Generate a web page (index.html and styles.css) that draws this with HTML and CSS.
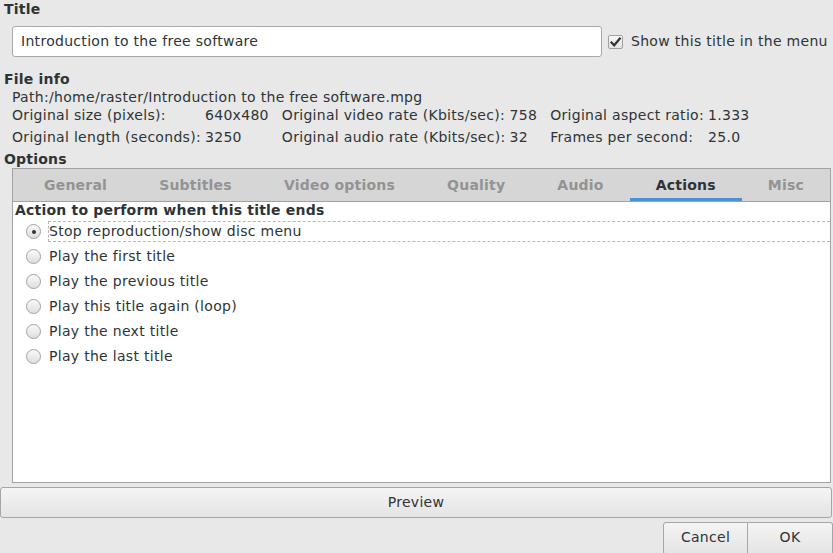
FILE: index.html
```html
<!DOCTYPE html>
<html>
<head>
<meta charset="utf-8">
<link rel="stylesheet" href="styles.css">
</head>
<body>
<div class="window">
  <div class="heading">Title</div>
  <div class="title-row">
    <div class="entry">Introduction to the free software</div>
    <label class="check">
      <span class="checkbox"><svg width="13" height="12" viewBox="0 0 13 12"><path d="M2.5 6.5 L5.2 9.3 L10.8 2.6" fill="none" stroke="#2e3436" stroke-width="2.2" stroke-linecap="square"/></svg></span>
      <span class="check-text">Show this title in the menu</span>
    </label>
  </div>
  <div class="heading fileinfo">File info</div>
  <div class="info">
    <div class="path">Path:/home/raster/Introduction to the free software.mpg</div>
    <div class="grid">
      <span class="lbl">Original size (pixels):</span><span class="val">640x480</span>
      <span class="lbl">Original video rate (Kbits/sec):</span><span class="val">758</span>
      <span class="lbl">Original aspect ratio:</span><span class="val">1.333</span>
      <span class="lbl">Original length (seconds):</span><span class="val">3250</span>
      <span class="lbl">Original audio rate (Kbits/sec):</span><span class="val">32</span>
      <span class="lbl">Frames per second:</span><span class="val">25.0</span>
    </div>
  </div>
  <div class="heading options">Options</div>
  <div class="notebook">
    <div class="tabs">
      <div class="tab">General</div>
      <div class="tab">Subtitles</div>
      <div class="tab">Video options</div>
      <div class="tab">Quality</div>
      <div class="tab">Audio</div>
      <div class="tab active">Actions</div>
      <div class="tab">Misc</div>
    </div>
    <div class="page">
      <div class="page-title">Action to perform when this title ends</div>
      <div class="radio-row"><span class="radio checked"></span><span class="rlabel focus">Stop reproduction/show disc menu</span></div>
      <div class="radio-row"><span class="radio"></span><span class="rlabel">Play the first title</span></div>
      <div class="radio-row"><span class="radio"></span><span class="rlabel">Play the previous title</span></div>
      <div class="radio-row"><span class="radio"></span><span class="rlabel">Play this title again (loop)</span></div>
      <div class="radio-row"><span class="radio"></span><span class="rlabel">Play the next title</span></div>
      <div class="radio-row"><span class="radio"></span><span class="rlabel">Play the last title</span></div>
    </div>
  </div>
  <div class="button preview">Preview</div>
  <div class="actions">
    <div class="button act first">Cancel</div>
    <div class="button act last">OK</div>
  </div>
</div>
</body>
</html>
```

FILE: styles.css
```css
html, body {
  margin: 0;
  padding: 0;
  background: #e8e8e8;
}
body {
  font-family: "DejaVu Sans", sans-serif;
  font-size: 14px;
  letter-spacing: 0.3px;
  color: #2e3436;
  width: 833px;
  height: 553px;
  overflow: hidden;
}
.window {
  display: flex;
  flex-direction: column;
}
.heading {
  font-weight: bold;
  letter-spacing: 0.2px;
  line-height: 18px;
  height: 18px;
  padding-left: 4px;
}
.title-row {
  display: flex;
  align-items: center;
  margin-top: 8px;
  padding-left: 12px;
}
.entry {
  height: 29px;
  line-height: 29px;
  border: 1px solid #a9a9a9;
  border-radius: 3px;
  background: #ffffff;
  padding-left: 8px;
  width: 580px;
}
.check {
  display: flex;
  align-items: center;
  margin-left: 6px;
}
.check-text {
  position: relative;
  top: -1px;
}
.checkbox {
  width: 13px;
  height: 12px;
  border: 1px solid #a0a0a0;
  border-radius: 2px;
  background: linear-gradient(#f8f8f8, #e2e2e2);
  display: flex;
  align-items: center;
  justify-content: center;
  margin-right: 8px;
}
.checkbox svg { display: block; }
.fileinfo { margin-top: 13px; }
.info {
  padding-left: 12px;
  line-height: 18px;
}
.path { height: 18px; }
.grid {
  display: grid;
  grid-template-columns: auto auto auto auto auto 1fr;
  row-gap: 4px;
}
.lbl { padding-right: 4px; }
.val { padding-right: 13px; }
.options { margin-top: 4px; }
.notebook {
  margin-left: 12px;
  width: 817px;
  height: 313px;
  border: 1px solid #a3a3a3;
  display: flex;
  flex-direction: column;
  background: #ffffff;
}
.tabs {
  display: flex;
  height: 32px;
  background: #d6d6d6;
  border-bottom: 1px solid #a3a3a3;
  padding-left: 5px;
}
.tab {
  flex: 1 1 auto;
  text-align: center;
  font-weight: bold;
  letter-spacing: 0.2px;
  color: #939393;
  line-height: 32px;
  padding: 0 10px;
}
.tab.active {
  color: #2e3436;
  box-shadow: inset 0 -3px 0 #4a90d9;
}
.page {
  flex: 1;
  background: #ffffff;
}
.page-title {
  font-weight: bold;
  letter-spacing: 0.2px;
  line-height: 17px;
  height: 17px;
  padding-left: 2px;
}
.radio-row {
  display: flex;
  align-items: center;
  height: 25px;
  padding-left: 13px;
}
.radio {
  width: 13px;
  height: 13px;
  border: 1px solid #a2a2a2;
  border-radius: 50%;
  background: linear-gradient(#f9f9f9, #dedede);
  margin-right: 7px;
  flex: none;
  position: relative;
}
.radio.checked::after {
  content: "";
  position: absolute;
  left: 4.5px;
  top: 4.5px;
  width: 4px;
  height: 4px;
  border-radius: 50%;
  background: #2e3436;
}
.rlabel {
  flex: 1;
  line-height: 19px;
  border: 1px solid transparent;
}
.rlabel.focus {
  border: 1px dashed #b8b8b8;
  border-right: none;
}
.button {
  background: linear-gradient(#f4f4f4, #e4e4e4);
  border: 1px solid #a6a6a6;
  border-radius: 3px;
  text-align: center;
  color: #2e3436;
}
.preview {
  margin-top: 4px;
  height: 29px;
  line-height: 29px;
  width: 830px;
}
.actions {
  display: flex;
  justify-content: flex-end;
  margin-top: 4px;
}
.act {
  width: 83px;
  height: 31px;
  line-height: 29px;
}
.act.first {
  border-radius: 3px 0 0 3px;
}
.act.last {
  border-left: none;
  width: 84px;
  border-radius: 0 3px 3px 0;
}
```
